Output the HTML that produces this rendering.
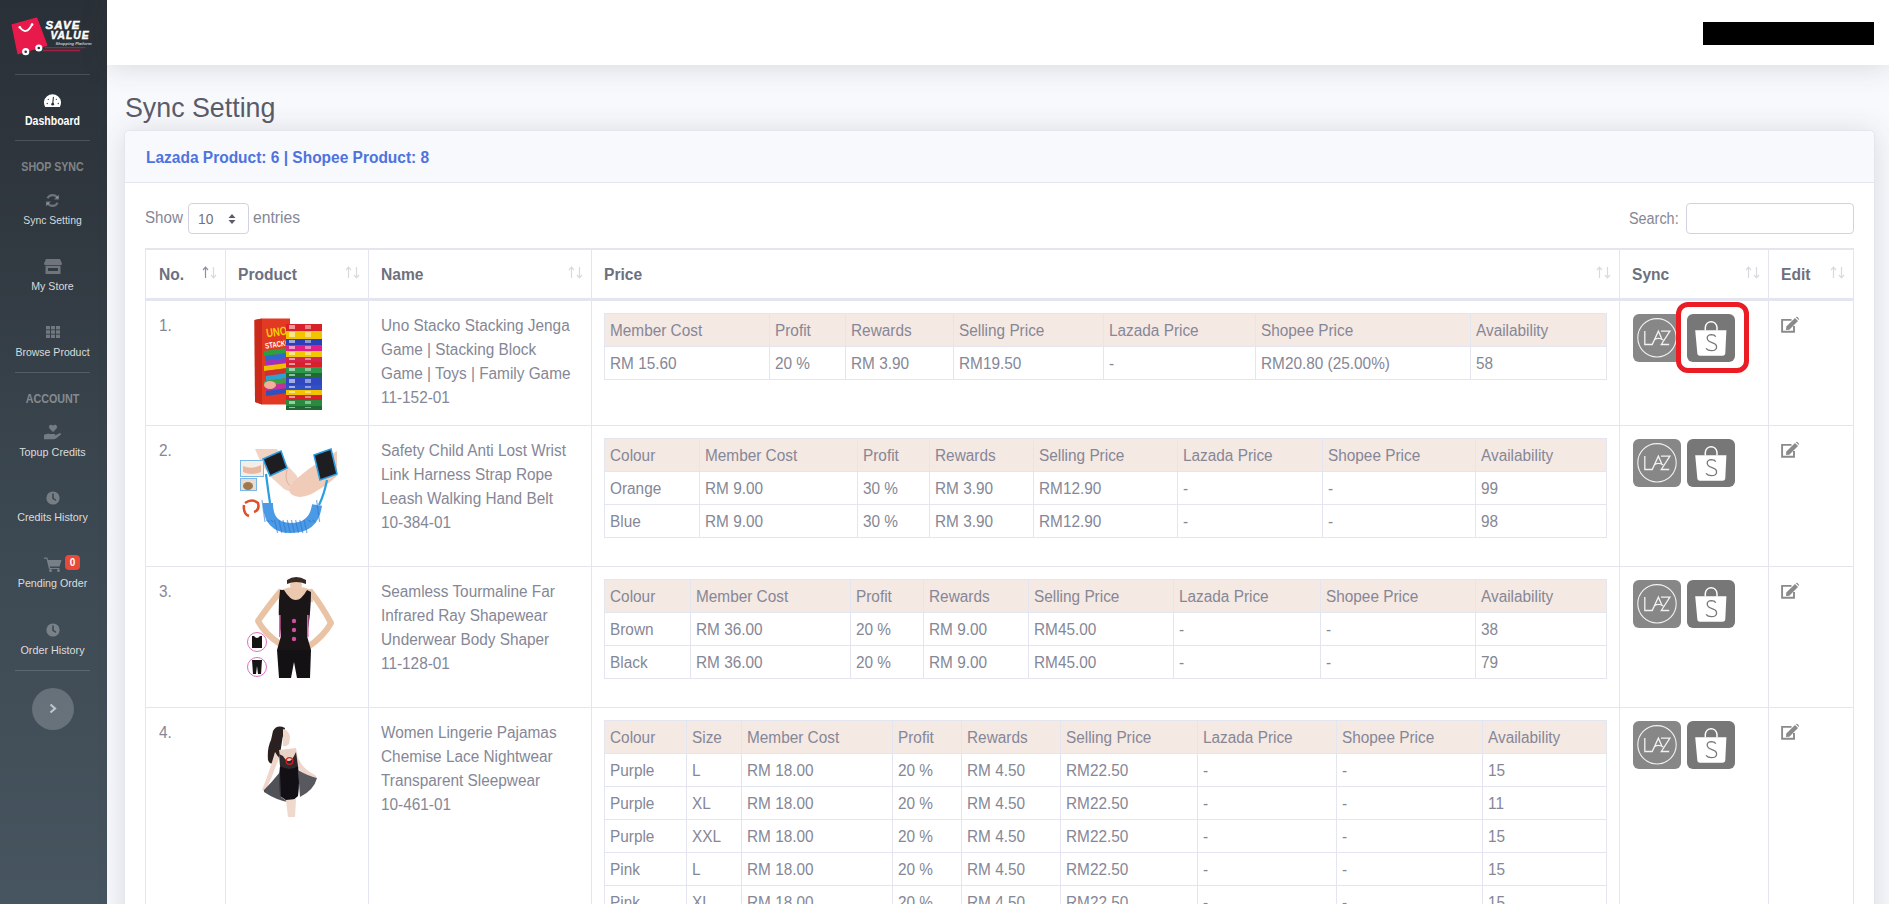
<!DOCTYPE html><html><head><meta charset="utf-8"><title>Sync Setting</title><style>
*{box-sizing:border-box}
html,body{margin:0;padding:0}
body{width:1889px;height:904px;overflow:hidden;position:relative;background:#f8f9fc;font-family:"Liberation Sans",sans-serif;color:#858796}
.abs{position:absolute}
.t{position:absolute;white-space:nowrap;line-height:1}
.sb{position:absolute;left:0;top:0;width:107px;height:904px;background:linear-gradient(180deg,#2a3037 0%,#2f363d 20%,#3b4750 55%,#475560 100%)}
.sbdiv{position:absolute;left:15px;width:75px;height:1px;background:rgba(255,255,255,.15)}
.sbt{position:absolute;left:0;width:107px;text-align:center;white-space:nowrap;line-height:1;font-size:10.5px;color:rgba(255,255,255,.85)}
.sbh{position:absolute;left:0;width:107px;text-align:center;white-space:nowrap;line-height:1;font-size:10.5px;font-weight:700;color:rgba(255,255,255,.4)}
.topbar{position:absolute;left:107px;top:0;width:1782px;height:65px;background:#fff;box-shadow:0 2.4px 28px 0 rgba(58,59,69,.16)}
.card{position:absolute;left:124px;top:130px;width:1751px;height:800px;background:#fff;border:1px solid #e3e6f0;border-radius:5px;box-shadow:0 2.4px 28px 0 rgba(58,59,69,.16);overflow:hidden}
.vl{position:absolute;width:1px;background:#e3e6f0}
.hl{position:absolute;height:1px;background:#e3e6f0}
</style></head><body>
<div class="sb">
<svg class="abs" style="left:0;top:0" width="107" height="70" viewBox="0 0 107 70">
<polygon points="12.3,25 36.6,18.2 46.7,45.3 18.1,53.5" fill="#e8194b" stroke="#e8194b" stroke-width="1.5" stroke-linejoin="round"/>
<path d="M19.8,27.3 Q26,36 32.1,24.5" fill="none" stroke="#fff" stroke-width="1.8" stroke-linecap="round"/>
<circle cx="19.8" cy="27.3" r="1.3" fill="#fff"/><circle cx="32.1" cy="24.5" r="1.3" fill="#fff"/>
<line x1="45" y1="47.6" x2="85.3" y2="47.6" stroke="#9c2440" stroke-width="1.3"/>
<line x1="43" y1="50.5" x2="80.2" y2="50.5" stroke="#9c2440" stroke-width="1.3"/>
<circle cx="25.7" cy="51.7" r="3.6" fill="#fff"/><circle cx="25.7" cy="51.7" r="1.3" fill="#2b3138"/>
<circle cx="38.8" cy="48" r="3.6" fill="#fff"/><circle cx="38.8" cy="48" r="1.3" fill="#2b3138"/>
<text x="45.5" y="28.6" font-family="Liberation Sans" font-weight="700" font-style="italic" font-size="10" fill="#fff" stroke="#fff" stroke-width="0.45" textLength="35" lengthAdjust="spacingAndGlyphs" letter-spacing="1">SAVE</text>
<text x="50.5" y="38.9" font-family="Liberation Sans" font-weight="700" font-style="italic" font-size="10" fill="#fff" stroke="#fff" stroke-width="0.45" textLength="39" lengthAdjust="spacingAndGlyphs" letter-spacing="1">VALUE</text>
<text x="55.5" y="44.6" font-family="Liberation Sans" font-weight="700" font-style="italic" font-size="3.3" fill="#c9ccd0" textLength="36" lengthAdjust="spacingAndGlyphs">Shopping Platform</text>
</svg>
<div class="sbdiv" style="top:74px"></div>
<svg class="abs" style="left:44px;top:94px" width="17" height="13" viewBox="0 0 17 13">
<path d="M1.2,13 A8.5,8.5 0 1 1 15.8,13 Z" fill="#fff"/>
<path d="M8.7,10.2 L9.4,3.3" stroke="#2c3239" stroke-width="1.1" stroke-linecap="round"/>
<circle cx="8.7" cy="10.2" r="1.4" fill="#2c3239"/>
<circle cx="4.3" cy="5.3" r="0.65" fill="#2c3239"/><circle cx="12.3" cy="5.3" r="0.65" fill="#2c3239"/>
<circle cx="3.2" cy="9.5" r="0.65" fill="#2c3239"/><circle cx="14.3" cy="9.5" r="0.65" fill="#2c3239"/>
</svg>
<div class="t" style="left:0;width:105px;text-align:center;top:115.34px;font-size:12px;font-weight:700;color:#fff;transform:scaleX(0.877);transform-origin:52.5px 0">Dashboard</div>
<div class="sbdiv" style="top:140px"></div>
<div class="t" style="left:0;width:105px;text-align:center;top:161.39px;font-size:12.3px;font-weight:700;color:rgba(255,255,255,.4);transform:scaleX(0.863);transform-origin:52.5px 0">SHOP SYNC</div>
<svg class="abs" style="left:45px;top:193px" width="15" height="15" viewBox="0 0 16 16">
<path d="M13.2,5.3 A6,6 0 0 0 2.6,5.6" fill="none" stroke="rgba(255,255,255,.3)" stroke-width="2.2"/>
<polygon points="15,1.5 15,7 9.5,7" fill="rgba(255,255,255,.3)"/>
<path d="M2.8,10.7 A6,6 0 0 0 13.4,10.4" fill="none" stroke="rgba(255,255,255,.3)" stroke-width="2.2"/>
<polygon points="1,14.5 1,9 6.5,9" fill="rgba(255,255,255,.3)"/>
</svg>
<div class="t" style="left:0;width:105px;text-align:center;top:214.77px;font-size:10.9px;font-weight:400;color:rgba(255,255,255,.82);transform:scaleX(0.956);transform-origin:52.5px 0">Sync Setting</div>
<svg class="abs" style="left:44px;top:259px" width="18" height="15" viewBox="0 0 18 15">
<path d="M2,0 H16 L18,4.5 Q18,6 16.5,6.2 H1.5 Q0,6 0,4.5 Z" fill="rgba(255,255,255,.3)"/>
<path d="M1.5,7 H16.5 V15 H1.5 Z M4,9 V12 H14 V9 Z" fill="rgba(255,255,255,.3)" fill-rule="evenodd"/>
</svg>
<div class="t" style="left:0;width:105px;text-align:center;top:281.27px;font-size:10.9px;font-weight:400;color:rgba(255,255,255,.82);transform:scaleX(0.977);transform-origin:52.5px 0">My Store</div>
<svg class="abs" style="left:45px;top:326px" width="16" height="13" viewBox="0 0 16 13"><rect x="1" y="0.0" width="4" height="3.4" fill="rgba(255,255,255,.3)"/><rect x="6" y="0.0" width="4" height="3.4" fill="rgba(255,255,255,.3)"/><rect x="11" y="0.0" width="4" height="3.4" fill="rgba(255,255,255,.3)"/><rect x="1" y="4.3" width="4" height="3.4" fill="rgba(255,255,255,.3)"/><rect x="6" y="4.3" width="4" height="3.4" fill="rgba(255,255,255,.3)"/><rect x="11" y="4.3" width="4" height="3.4" fill="rgba(255,255,255,.3)"/><rect x="1" y="8.6" width="4" height="3.4" fill="rgba(255,255,255,.3)"/><rect x="6" y="8.6" width="4" height="3.4" fill="rgba(255,255,255,.3)"/><rect x="11" y="8.6" width="4" height="3.4" fill="rgba(255,255,255,.3)"/></svg>
<div class="t" style="left:0;width:105px;text-align:center;top:347.27px;font-size:10.9px;font-weight:400;color:rgba(255,255,255,.82);transform:scaleX(0.965);transform-origin:52.5px 0">Browse Product</div>
<div class="sbdiv" style="top:372px"></div>
<div class="t" style="left:0;width:105px;text-align:center;top:392.59px;font-size:12.3px;font-weight:700;color:rgba(255,255,255,.4);transform:scaleX(0.873);transform-origin:52.5px 0">ACCOUNT</div>
<svg class="abs" style="left:44px;top:424px" width="18" height="16" viewBox="0 0 18 16">
<path d="M9,8 L5.5,4.5 Q4,2.5 5.8,1 Q7.5,0 9,1.8 Q10.5,0 12.2,1 Q14,2.5 12.5,4.5 Z" fill="rgba(255,255,255,.3)"/>
<path d="M0,11 Q3,9 6,10 H10.5 Q11.8,10.3 11,11.5 H7.5 H11 L15.5,9.3 Q17.5,9 17,10.5 L12,14.5 Q11,15.3 9.5,15.3 H0 Z" fill="rgba(255,255,255,.3)"/>
</svg>
<div class="t" style="left:0;width:105px;text-align:center;top:446.77px;font-size:10.9px;font-weight:400;color:rgba(255,255,255,.82);transform:scaleX(0.99);transform-origin:52.5px 0">Topup Credits</div>
<svg class="abs" style="left:46px;top:491px" width="14" height="14" viewBox="0 0 14 14">
<circle cx="7" cy="7" r="6.6" fill="rgba(255,255,255,.3)"/><path d="M7,3 V7.3 L9.5,9" stroke="#3a444c" stroke-width="1.5" fill="none" stroke-linecap="round"/></svg>
<div class="t" style="left:0;width:105px;text-align:center;top:512.27px;font-size:10.9px;font-weight:400;color:rgba(255,255,255,.82);transform:scaleX(0.99);transform-origin:52.5px 0">Credits History</div>
<svg class="abs" style="left:44px;top:557px" width="18" height="15" viewBox="0 0 18 15">
<path d="M0,0.5 H3.3 L4,3 H17.5 L15.5,9.5 H5.8 L6.2,11 H15.5 V12 H5 L2.5,1.8 H0 Z" fill="rgba(255,255,255,.3)"/>
<circle cx="6.5" cy="13.5" r="1.5" fill="rgba(255,255,255,.3)"/><circle cx="14.5" cy="13.5" r="1.5" fill="rgba(255,255,255,.3)"/>
</svg>
<div class="abs" style="left:65px;top:555px;width:15px;height:15px;border-radius:4px;background:#e74a3b;color:#fff;font-size:10px;font-weight:700;line-height:15px;text-align:center">0</div>
<div class="t" style="left:0;width:105px;text-align:center;top:578.27px;font-size:10.9px;font-weight:400;color:rgba(255,255,255,.82);transform:scaleX(0.98);transform-origin:52.5px 0">Pending Order</div>
<svg class="abs" style="left:46px;top:623px" width="14" height="14" viewBox="0 0 14 14">
<circle cx="7" cy="7" r="6.6" fill="rgba(255,255,255,.3)"/><path d="M7,3 V7.3 L9.5,9" stroke="#3a444c" stroke-width="1.5" fill="none" stroke-linecap="round"/></svg>
<div class="t" style="left:0;width:105px;text-align:center;top:644.77px;font-size:10.9px;font-weight:400;color:rgba(255,255,255,.82);transform:scaleX(0.99);transform-origin:52.5px 0">Order History</div>
<div class="sbdiv" style="top:670px"></div>
<div class="abs" style="left:32px;top:688px;width:42px;height:42px;border-radius:50%;background:rgba(255,255,255,.2)"></div>
<svg class="abs" style="left:49px;top:703px" width="8" height="11" viewBox="0 0 8 11"><path d="M1.5,1.5 L6,5.5 L1.5,9.5" fill="none" stroke="rgba(225,232,245,.7)" stroke-width="2.2"/></svg>
</div>
<div class="topbar"><div class="abs" style="left:1596px;top:22px;width:171px;height:23px;background:#000"></div></div>
<div class="t" style="left:125px;top:92.87px;font-size:28.5px;color:#5a5c69;transform:scaleX(0.94);transform-origin:0 0">Sync Setting</div>
<div class="card">
</div>
<div class="abs" style="left:125px;top:131px;width:1749px;height:52px;background:#f8f9fc;border-bottom:1px solid #e3e6f0;border-radius:5px 5px 0 0"></div>
<div class="t" style="left:146px;top:150.46px;font-size:16px;font-weight:700;color:#4e73df;transform:scaleX(0.968);transform-origin:0 0">Lazada Product: 6 | Shopee Product: 8</div>
<div class="t" style="left:145px;top:210.46px;font-size:16px;font-weight:400;color:#858796;transform:scaleX(0.945);transform-origin:0 0;">Show</div>
<div class="abs" style="left:188px;top:203px;width:61px;height:31px;border:1px solid #d1d3e2;border-radius:4px;background:#fff"></div>
<div class="t" style="left:198px;top:211.73px;font-size:14.5px;font-weight:400;color:#6e707e;transform:scaleX(0.95);transform-origin:0 0;">10</div>
<svg class="abs" style="left:228px;top:213px" width="8" height="12" viewBox="0 0 8 12"><path d="M0.5,5 L4,1 L7.5,5 Z M0.5,7 L4,11 L7.5,7 Z" fill="#5a5c69"/></svg>
<div class="t" style="left:253px;top:210.46px;font-size:16px;font-weight:400;color:#858796;transform:scaleX(0.98);transform-origin:0 0;">entries</div>
<div class="t" style="left:1629px;top:211.46px;font-size:16px;font-weight:400;color:#858796;transform:scaleX(0.9);transform-origin:0 0;">Search:</div>
<div class="abs" style="left:1686px;top:203px;width:168px;height:31px;border:1px solid #d1d3e2;border-radius:4px;background:#fff"></div>
<div class="abs" style="left:145px;top:248px;width:1709px;height:2px;background:#e3e6f0"></div>
<div class="vl" style="left:145px;top:248px;height:656px"></div>
<div class="vl" style="left:1853px;top:248px;height:656px"></div>
<div class="vl" style="left:225px;top:250px;height:654px"></div>
<div class="vl" style="left:368px;top:250px;height:654px"></div>
<div class="vl" style="left:591px;top:250px;height:654px"></div>
<div class="vl" style="left:1619px;top:250px;height:654px"></div>
<div class="vl" style="left:1768px;top:250px;height:654px"></div>
<div class="abs" style="left:145px;top:298px;width:1709px;height:3px;background:#e3e6f0"></div>
<div class="hl" style="left:145px;top:425px;width:1709px"></div>
<div class="hl" style="left:145px;top:566px;width:1709px"></div>
<div class="hl" style="left:145px;top:707px;width:1709px"></div>
<div class="t" style="left:159px;top:267.46px;font-size:16px;font-weight:700;color:#6e707e;transform:scaleX(0.975);transform-origin:0 0;">No.</div>
<div class="t" style="left:238px;top:267.46px;font-size:16px;font-weight:700;color:#6e707e;transform:scaleX(0.975);transform-origin:0 0;">Product</div>
<div class="t" style="left:381px;top:267.46px;font-size:16px;font-weight:700;color:#6e707e;transform:scaleX(0.975);transform-origin:0 0;">Name</div>
<div class="t" style="left:604px;top:267.46px;font-size:16px;font-weight:700;color:#6e707e;transform:scaleX(0.975);transform-origin:0 0;">Price</div>
<div class="t" style="left:1632px;top:267.46px;font-size:16px;font-weight:700;color:#6e707e;transform:scaleX(0.975);transform-origin:0 0;">Sync</div>
<div class="t" style="left:1781px;top:267.46px;font-size:16px;font-weight:700;color:#6e707e;transform:scaleX(0.975);transform-origin:0 0;">Edit</div>
<svg class="abs" style="left:202px;top:266px" width="16" height="13" viewBox="0 0 16 13"><path d="M3.5,12 V1.5 M1,4 L3.5,1.2 L6,4" fill="none" stroke="#8d8f9e" stroke-width="1.2"/><path d="M11.5,1 V11.5 M9,9 L11.5,11.8 L14,9" fill="none" stroke="#d9dae0" stroke-width="1.2"/></svg>
<svg class="abs" style="left:345px;top:266px" width="16" height="13" viewBox="0 0 16 13"><path d="M3.5,12 V1.5 M1,4 L3.5,1.2 L6,4" fill="none" stroke="#d9dae0" stroke-width="1.2"/><path d="M11.5,1 V11.5 M9,9 L11.5,11.8 L14,9" fill="none" stroke="#d9dae0" stroke-width="1.2"/></svg>
<svg class="abs" style="left:568px;top:266px" width="16" height="13" viewBox="0 0 16 13"><path d="M3.5,12 V1.5 M1,4 L3.5,1.2 L6,4" fill="none" stroke="#d9dae0" stroke-width="1.2"/><path d="M11.5,1 V11.5 M9,9 L11.5,11.8 L14,9" fill="none" stroke="#d9dae0" stroke-width="1.2"/></svg>
<svg class="abs" style="left:1596px;top:266px" width="16" height="13" viewBox="0 0 16 13"><path d="M3.5,12 V1.5 M1,4 L3.5,1.2 L6,4" fill="none" stroke="#d9dae0" stroke-width="1.2"/><path d="M11.5,1 V11.5 M9,9 L11.5,11.8 L14,9" fill="none" stroke="#d9dae0" stroke-width="1.2"/></svg>
<svg class="abs" style="left:1745px;top:266px" width="16" height="13" viewBox="0 0 16 13"><path d="M3.5,12 V1.5 M1,4 L3.5,1.2 L6,4" fill="none" stroke="#d9dae0" stroke-width="1.2"/><path d="M11.5,1 V11.5 M9,9 L11.5,11.8 L14,9" fill="none" stroke="#d9dae0" stroke-width="1.2"/></svg>
<svg class="abs" style="left:1830px;top:266px" width="16" height="13" viewBox="0 0 16 13"><path d="M3.5,12 V1.5 M1,4 L3.5,1.2 L6,4" fill="none" stroke="#d9dae0" stroke-width="1.2"/><path d="M11.5,1 V11.5 M9,9 L11.5,11.8 L14,9" fill="none" stroke="#d9dae0" stroke-width="1.2"/></svg>
<div class="t" style="left:159px;top:318.46px;font-size:16px;font-weight:400;color:#858796;transform:scaleX(0.96);transform-origin:0 0;">1.</div>
<div class="t" style="left:381px;top:318.46px;font-size:16px;font-weight:400;color:#858796;transform:scaleX(0.96);transform-origin:0 0;">Uno Stacko Stacking Jenga</div>
<div class="t" style="left:381px;top:342.46px;font-size:16px;font-weight:400;color:#858796;transform:scaleX(0.96);transform-origin:0 0;">Game | Stacking Block</div>
<div class="t" style="left:381px;top:366.46px;font-size:16px;font-weight:400;color:#858796;transform:scaleX(0.96);transform-origin:0 0;">Game | Toys | Family Game</div>
<div class="t" style="left:381px;top:390.46px;font-size:16px;font-weight:400;color:#858796;transform:scaleX(0.96);transform-origin:0 0;">11-152-01</div>
<div class="abs" style="left:604px;top:313px;width:1003px;height:34px;background:#f5e9e4"></div>
<div class="hl" style="left:604px;top:313px;width:1003px"></div>
<div class="hl" style="left:604px;top:346px;width:1003px"></div>
<div class="hl" style="left:604px;top:379px;width:1003px"></div>
<div class="vl" style="left:604px;top:313px;height:67px"></div>
<div class="vl" style="left:769px;top:313px;height:67px"></div>
<div class="vl" style="left:845px;top:313px;height:67px"></div>
<div class="vl" style="left:953px;top:313px;height:67px"></div>
<div class="vl" style="left:1103px;top:313px;height:67px"></div>
<div class="vl" style="left:1255px;top:313px;height:67px"></div>
<div class="vl" style="left:1470px;top:313px;height:67px"></div>
<div class="vl" style="left:1606px;top:313px;height:67px"></div>
<div class="t" style="left:610px;top:323.46px;font-size:16px;font-weight:400;color:#858796;transform:scaleX(0.96);transform-origin:0 0;">Member Cost</div>
<div class="t" style="left:775px;top:323.46px;font-size:16px;font-weight:400;color:#858796;transform:scaleX(0.96);transform-origin:0 0;">Profit</div>
<div class="t" style="left:851px;top:323.46px;font-size:16px;font-weight:400;color:#858796;transform:scaleX(0.96);transform-origin:0 0;">Rewards</div>
<div class="t" style="left:959px;top:323.46px;font-size:16px;font-weight:400;color:#858796;transform:scaleX(0.96);transform-origin:0 0;">Selling Price</div>
<div class="t" style="left:1109px;top:323.46px;font-size:16px;font-weight:400;color:#858796;transform:scaleX(0.96);transform-origin:0 0;">Lazada Price</div>
<div class="t" style="left:1261px;top:323.46px;font-size:16px;font-weight:400;color:#858796;transform:scaleX(0.96);transform-origin:0 0;">Shopee Price</div>
<div class="t" style="left:1476px;top:323.46px;font-size:16px;font-weight:400;color:#858796;transform:scaleX(0.96);transform-origin:0 0;">Availability</div>
<div class="t" style="left:610px;top:356.46px;font-size:16px;font-weight:400;color:#858796;transform:scaleX(0.96);transform-origin:0 0;">RM 15.60</div>
<div class="t" style="left:775px;top:356.46px;font-size:16px;font-weight:400;color:#858796;transform:scaleX(0.96);transform-origin:0 0;">20 %</div>
<div class="t" style="left:851px;top:356.46px;font-size:16px;font-weight:400;color:#858796;transform:scaleX(0.96);transform-origin:0 0;">RM 3.90</div>
<div class="t" style="left:959px;top:356.46px;font-size:16px;font-weight:400;color:#858796;transform:scaleX(0.96);transform-origin:0 0;">RM19.50</div>
<div class="t" style="left:1109px;top:356.46px;font-size:16px;font-weight:400;color:#858796;transform:scaleX(0.96);transform-origin:0 0;">-</div>
<div class="t" style="left:1261px;top:356.46px;font-size:16px;font-weight:400;color:#858796;transform:scaleX(0.96);transform-origin:0 0;">RM20.80 (25.00%)</div>
<div class="t" style="left:1476px;top:356.46px;font-size:16px;font-weight:400;color:#858796;transform:scaleX(0.96);transform-origin:0 0;">58</div>
<svg class="abs" style="left:1633px;top:314px" width="48" height="48" viewBox="0 0 48 48"><rect x="0" y="0" width="48" height="48" rx="6" fill="#878787"/><circle cx="24" cy="23.8" r="19.2" fill="none" stroke="#f2f2f2" stroke-width="1.1"/><path d="M11.8,17.1 V30.5 H19.2 L25.4,17.2 L28.8,25.1 M21.9,25.4 Q25.5,23.3 30.2,25.9 M28,17.2 H36.9 L28.3,30.5 H36.2" fill="none" stroke="#f2f2f2" stroke-width="1.3" stroke-linejoin="miter"/></svg>
<svg class="abs" style="left:1687px;top:314px" width="48" height="48" viewBox="0 0 48 48"><rect x="0" y="0" width="48" height="48" rx="6" fill="#777777"/><path d="M18.3,16.4 V13.5 A5.9,6.6 0 0 1 30,13.5 V16.4" fill="none" stroke="#fff" stroke-width="1.5"/><path d="M8.2,16.2 H39.4 L38.3,39 Q38.2,41.8 35.5,41.8 H13 Q10.4,41.8 10.3,39 Z" fill="#fff"/><path d="M28.8,22.6 Q27.5,20.6 24.5,20.6 Q20,20.8 20.2,24.3 Q20.5,27.2 25,28.6 Q29.8,30 29.6,33.2 Q29.3,36.7 24.5,36.7 Q20.8,36.6 19,34.3" fill="none" stroke="#777" stroke-width="1.3"/></svg>
<svg class="abs" style="left:1780px;top:316px" width="20" height="18" viewBox="0 0 20 18"><path d="M11.5,3.9 H2.1 V15.8 H14 V10" fill="none" stroke="#8a8a8a" stroke-width="1.9"/><path d="M6,14 L6.3,10.6 L15,2 L18,5 L9.3,13.7 Z" fill="#8a8a8a"/><path d="M15.8,1.2 Q16.7,0.4 17.5,1.1 L18.8,2.4 Q19.6,3.2 18.8,4.1 Z" fill="#8a8a8a"/></svg>
<div class="t" style="left:159px;top:443.46px;font-size:16px;font-weight:400;color:#858796;transform:scaleX(0.96);transform-origin:0 0;">2.</div>
<div class="t" style="left:381px;top:443.46px;font-size:16px;font-weight:400;color:#858796;transform:scaleX(0.96);transform-origin:0 0;">Safety Child Anti Lost Wrist</div>
<div class="t" style="left:381px;top:467.46px;font-size:16px;font-weight:400;color:#858796;transform:scaleX(0.96);transform-origin:0 0;">Link Harness Strap Rope</div>
<div class="t" style="left:381px;top:491.46px;font-size:16px;font-weight:400;color:#858796;transform:scaleX(0.96);transform-origin:0 0;">Leash Walking Hand Belt</div>
<div class="t" style="left:381px;top:515.46px;font-size:16px;font-weight:400;color:#858796;transform:scaleX(0.96);transform-origin:0 0;">10-384-01</div>
<div class="abs" style="left:604px;top:438px;width:1003px;height:34px;background:#f5e9e4"></div>
<div class="hl" style="left:604px;top:438px;width:1003px"></div>
<div class="hl" style="left:604px;top:471px;width:1003px"></div>
<div class="hl" style="left:604px;top:504px;width:1003px"></div>
<div class="hl" style="left:604px;top:537px;width:1003px"></div>
<div class="vl" style="left:604px;top:438px;height:100px"></div>
<div class="vl" style="left:699px;top:438px;height:100px"></div>
<div class="vl" style="left:857px;top:438px;height:100px"></div>
<div class="vl" style="left:929px;top:438px;height:100px"></div>
<div class="vl" style="left:1033px;top:438px;height:100px"></div>
<div class="vl" style="left:1177px;top:438px;height:100px"></div>
<div class="vl" style="left:1322px;top:438px;height:100px"></div>
<div class="vl" style="left:1475px;top:438px;height:100px"></div>
<div class="vl" style="left:1606px;top:438px;height:100px"></div>
<div class="t" style="left:610px;top:448.46px;font-size:16px;font-weight:400;color:#858796;transform:scaleX(0.96);transform-origin:0 0;">Colour</div>
<div class="t" style="left:705px;top:448.46px;font-size:16px;font-weight:400;color:#858796;transform:scaleX(0.96);transform-origin:0 0;">Member Cost</div>
<div class="t" style="left:863px;top:448.46px;font-size:16px;font-weight:400;color:#858796;transform:scaleX(0.96);transform-origin:0 0;">Profit</div>
<div class="t" style="left:935px;top:448.46px;font-size:16px;font-weight:400;color:#858796;transform:scaleX(0.96);transform-origin:0 0;">Rewards</div>
<div class="t" style="left:1039px;top:448.46px;font-size:16px;font-weight:400;color:#858796;transform:scaleX(0.96);transform-origin:0 0;">Selling Price</div>
<div class="t" style="left:1183px;top:448.46px;font-size:16px;font-weight:400;color:#858796;transform:scaleX(0.96);transform-origin:0 0;">Lazada Price</div>
<div class="t" style="left:1328px;top:448.46px;font-size:16px;font-weight:400;color:#858796;transform:scaleX(0.96);transform-origin:0 0;">Shopee Price</div>
<div class="t" style="left:1481px;top:448.46px;font-size:16px;font-weight:400;color:#858796;transform:scaleX(0.96);transform-origin:0 0;">Availability</div>
<div class="t" style="left:610px;top:481.46px;font-size:16px;font-weight:400;color:#858796;transform:scaleX(0.96);transform-origin:0 0;">Orange</div>
<div class="t" style="left:705px;top:481.46px;font-size:16px;font-weight:400;color:#858796;transform:scaleX(0.96);transform-origin:0 0;">RM 9.00</div>
<div class="t" style="left:863px;top:481.46px;font-size:16px;font-weight:400;color:#858796;transform:scaleX(0.96);transform-origin:0 0;">30 %</div>
<div class="t" style="left:935px;top:481.46px;font-size:16px;font-weight:400;color:#858796;transform:scaleX(0.96);transform-origin:0 0;">RM 3.90</div>
<div class="t" style="left:1039px;top:481.46px;font-size:16px;font-weight:400;color:#858796;transform:scaleX(0.96);transform-origin:0 0;">RM12.90</div>
<div class="t" style="left:1183px;top:481.46px;font-size:16px;font-weight:400;color:#858796;transform:scaleX(0.96);transform-origin:0 0;">-</div>
<div class="t" style="left:1328px;top:481.46px;font-size:16px;font-weight:400;color:#858796;transform:scaleX(0.96);transform-origin:0 0;">-</div>
<div class="t" style="left:1481px;top:481.46px;font-size:16px;font-weight:400;color:#858796;transform:scaleX(0.96);transform-origin:0 0;">99</div>
<div class="t" style="left:610px;top:514.46px;font-size:16px;font-weight:400;color:#858796;transform:scaleX(0.96);transform-origin:0 0;">Blue</div>
<div class="t" style="left:705px;top:514.46px;font-size:16px;font-weight:400;color:#858796;transform:scaleX(0.96);transform-origin:0 0;">RM 9.00</div>
<div class="t" style="left:863px;top:514.46px;font-size:16px;font-weight:400;color:#858796;transform:scaleX(0.96);transform-origin:0 0;">30 %</div>
<div class="t" style="left:935px;top:514.46px;font-size:16px;font-weight:400;color:#858796;transform:scaleX(0.96);transform-origin:0 0;">RM 3.90</div>
<div class="t" style="left:1039px;top:514.46px;font-size:16px;font-weight:400;color:#858796;transform:scaleX(0.96);transform-origin:0 0;">RM12.90</div>
<div class="t" style="left:1183px;top:514.46px;font-size:16px;font-weight:400;color:#858796;transform:scaleX(0.96);transform-origin:0 0;">-</div>
<div class="t" style="left:1328px;top:514.46px;font-size:16px;font-weight:400;color:#858796;transform:scaleX(0.96);transform-origin:0 0;">-</div>
<div class="t" style="left:1481px;top:514.46px;font-size:16px;font-weight:400;color:#858796;transform:scaleX(0.96);transform-origin:0 0;">98</div>
<svg class="abs" style="left:1633px;top:439px" width="48" height="48" viewBox="0 0 48 48"><rect x="0" y="0" width="48" height="48" rx="6" fill="#878787"/><circle cx="24" cy="23.8" r="19.2" fill="none" stroke="#f2f2f2" stroke-width="1.1"/><path d="M11.8,17.1 V30.5 H19.2 L25.4,17.2 L28.8,25.1 M21.9,25.4 Q25.5,23.3 30.2,25.9 M28,17.2 H36.9 L28.3,30.5 H36.2" fill="none" stroke="#f2f2f2" stroke-width="1.3" stroke-linejoin="miter"/></svg>
<svg class="abs" style="left:1687px;top:439px" width="48" height="48" viewBox="0 0 48 48"><rect x="0" y="0" width="48" height="48" rx="6" fill="#777777"/><path d="M18.3,16.4 V13.5 A5.9,6.6 0 0 1 30,13.5 V16.4" fill="none" stroke="#fff" stroke-width="1.5"/><path d="M8.2,16.2 H39.4 L38.3,39 Q38.2,41.8 35.5,41.8 H13 Q10.4,41.8 10.3,39 Z" fill="#fff"/><path d="M28.8,22.6 Q27.5,20.6 24.5,20.6 Q20,20.8 20.2,24.3 Q20.5,27.2 25,28.6 Q29.8,30 29.6,33.2 Q29.3,36.7 24.5,36.7 Q20.8,36.6 19,34.3" fill="none" stroke="#777" stroke-width="1.3"/></svg>
<svg class="abs" style="left:1780px;top:441px" width="20" height="18" viewBox="0 0 20 18"><path d="M11.5,3.9 H2.1 V15.8 H14 V10" fill="none" stroke="#8a8a8a" stroke-width="1.9"/><path d="M6,14 L6.3,10.6 L15,2 L18,5 L9.3,13.7 Z" fill="#8a8a8a"/><path d="M15.8,1.2 Q16.7,0.4 17.5,1.1 L18.8,2.4 Q19.6,3.2 18.8,4.1 Z" fill="#8a8a8a"/></svg>
<div class="t" style="left:159px;top:584.46px;font-size:16px;font-weight:400;color:#858796;transform:scaleX(0.96);transform-origin:0 0;">3.</div>
<div class="t" style="left:381px;top:584.46px;font-size:16px;font-weight:400;color:#858796;transform:scaleX(0.96);transform-origin:0 0;">Seamless Tourmaline Far</div>
<div class="t" style="left:381px;top:608.46px;font-size:16px;font-weight:400;color:#858796;transform:scaleX(0.96);transform-origin:0 0;">Infrared Ray Shapewear</div>
<div class="t" style="left:381px;top:632.46px;font-size:16px;font-weight:400;color:#858796;transform:scaleX(0.96);transform-origin:0 0;">Underwear Body Shaper</div>
<div class="t" style="left:381px;top:656.46px;font-size:16px;font-weight:400;color:#858796;transform:scaleX(0.96);transform-origin:0 0;">11-128-01</div>
<div class="abs" style="left:604px;top:579px;width:1003px;height:34px;background:#f5e9e4"></div>
<div class="hl" style="left:604px;top:579px;width:1003px"></div>
<div class="hl" style="left:604px;top:612px;width:1003px"></div>
<div class="hl" style="left:604px;top:645px;width:1003px"></div>
<div class="hl" style="left:604px;top:678px;width:1003px"></div>
<div class="vl" style="left:604px;top:579px;height:100px"></div>
<div class="vl" style="left:690px;top:579px;height:100px"></div>
<div class="vl" style="left:850px;top:579px;height:100px"></div>
<div class="vl" style="left:923px;top:579px;height:100px"></div>
<div class="vl" style="left:1028px;top:579px;height:100px"></div>
<div class="vl" style="left:1173px;top:579px;height:100px"></div>
<div class="vl" style="left:1320px;top:579px;height:100px"></div>
<div class="vl" style="left:1475px;top:579px;height:100px"></div>
<div class="vl" style="left:1606px;top:579px;height:100px"></div>
<div class="t" style="left:610px;top:589.46px;font-size:16px;font-weight:400;color:#858796;transform:scaleX(0.96);transform-origin:0 0;">Colour</div>
<div class="t" style="left:696px;top:589.46px;font-size:16px;font-weight:400;color:#858796;transform:scaleX(0.96);transform-origin:0 0;">Member Cost</div>
<div class="t" style="left:856px;top:589.46px;font-size:16px;font-weight:400;color:#858796;transform:scaleX(0.96);transform-origin:0 0;">Profit</div>
<div class="t" style="left:929px;top:589.46px;font-size:16px;font-weight:400;color:#858796;transform:scaleX(0.96);transform-origin:0 0;">Rewards</div>
<div class="t" style="left:1034px;top:589.46px;font-size:16px;font-weight:400;color:#858796;transform:scaleX(0.96);transform-origin:0 0;">Selling Price</div>
<div class="t" style="left:1179px;top:589.46px;font-size:16px;font-weight:400;color:#858796;transform:scaleX(0.96);transform-origin:0 0;">Lazada Price</div>
<div class="t" style="left:1326px;top:589.46px;font-size:16px;font-weight:400;color:#858796;transform:scaleX(0.96);transform-origin:0 0;">Shopee Price</div>
<div class="t" style="left:1481px;top:589.46px;font-size:16px;font-weight:400;color:#858796;transform:scaleX(0.96);transform-origin:0 0;">Availability</div>
<div class="t" style="left:610px;top:622.46px;font-size:16px;font-weight:400;color:#858796;transform:scaleX(0.96);transform-origin:0 0;">Brown</div>
<div class="t" style="left:696px;top:622.46px;font-size:16px;font-weight:400;color:#858796;transform:scaleX(0.96);transform-origin:0 0;">RM 36.00</div>
<div class="t" style="left:856px;top:622.46px;font-size:16px;font-weight:400;color:#858796;transform:scaleX(0.96);transform-origin:0 0;">20 %</div>
<div class="t" style="left:929px;top:622.46px;font-size:16px;font-weight:400;color:#858796;transform:scaleX(0.96);transform-origin:0 0;">RM 9.00</div>
<div class="t" style="left:1034px;top:622.46px;font-size:16px;font-weight:400;color:#858796;transform:scaleX(0.96);transform-origin:0 0;">RM45.00</div>
<div class="t" style="left:1179px;top:622.46px;font-size:16px;font-weight:400;color:#858796;transform:scaleX(0.96);transform-origin:0 0;">-</div>
<div class="t" style="left:1326px;top:622.46px;font-size:16px;font-weight:400;color:#858796;transform:scaleX(0.96);transform-origin:0 0;">-</div>
<div class="t" style="left:1481px;top:622.46px;font-size:16px;font-weight:400;color:#858796;transform:scaleX(0.96);transform-origin:0 0;">38</div>
<div class="t" style="left:610px;top:655.46px;font-size:16px;font-weight:400;color:#858796;transform:scaleX(0.96);transform-origin:0 0;">Black</div>
<div class="t" style="left:696px;top:655.46px;font-size:16px;font-weight:400;color:#858796;transform:scaleX(0.96);transform-origin:0 0;">RM 36.00</div>
<div class="t" style="left:856px;top:655.46px;font-size:16px;font-weight:400;color:#858796;transform:scaleX(0.96);transform-origin:0 0;">20 %</div>
<div class="t" style="left:929px;top:655.46px;font-size:16px;font-weight:400;color:#858796;transform:scaleX(0.96);transform-origin:0 0;">RM 9.00</div>
<div class="t" style="left:1034px;top:655.46px;font-size:16px;font-weight:400;color:#858796;transform:scaleX(0.96);transform-origin:0 0;">RM45.00</div>
<div class="t" style="left:1179px;top:655.46px;font-size:16px;font-weight:400;color:#858796;transform:scaleX(0.96);transform-origin:0 0;">-</div>
<div class="t" style="left:1326px;top:655.46px;font-size:16px;font-weight:400;color:#858796;transform:scaleX(0.96);transform-origin:0 0;">-</div>
<div class="t" style="left:1481px;top:655.46px;font-size:16px;font-weight:400;color:#858796;transform:scaleX(0.96);transform-origin:0 0;">79</div>
<svg class="abs" style="left:1633px;top:580px" width="48" height="48" viewBox="0 0 48 48"><rect x="0" y="0" width="48" height="48" rx="6" fill="#878787"/><circle cx="24" cy="23.8" r="19.2" fill="none" stroke="#f2f2f2" stroke-width="1.1"/><path d="M11.8,17.1 V30.5 H19.2 L25.4,17.2 L28.8,25.1 M21.9,25.4 Q25.5,23.3 30.2,25.9 M28,17.2 H36.9 L28.3,30.5 H36.2" fill="none" stroke="#f2f2f2" stroke-width="1.3" stroke-linejoin="miter"/></svg>
<svg class="abs" style="left:1687px;top:580px" width="48" height="48" viewBox="0 0 48 48"><rect x="0" y="0" width="48" height="48" rx="6" fill="#777777"/><path d="M18.3,16.4 V13.5 A5.9,6.6 0 0 1 30,13.5 V16.4" fill="none" stroke="#fff" stroke-width="1.5"/><path d="M8.2,16.2 H39.4 L38.3,39 Q38.2,41.8 35.5,41.8 H13 Q10.4,41.8 10.3,39 Z" fill="#fff"/><path d="M28.8,22.6 Q27.5,20.6 24.5,20.6 Q20,20.8 20.2,24.3 Q20.5,27.2 25,28.6 Q29.8,30 29.6,33.2 Q29.3,36.7 24.5,36.7 Q20.8,36.6 19,34.3" fill="none" stroke="#777" stroke-width="1.3"/></svg>
<svg class="abs" style="left:1780px;top:582px" width="20" height="18" viewBox="0 0 20 18"><path d="M11.5,3.9 H2.1 V15.8 H14 V10" fill="none" stroke="#8a8a8a" stroke-width="1.9"/><path d="M6,14 L6.3,10.6 L15,2 L18,5 L9.3,13.7 Z" fill="#8a8a8a"/><path d="M15.8,1.2 Q16.7,0.4 17.5,1.1 L18.8,2.4 Q19.6,3.2 18.8,4.1 Z" fill="#8a8a8a"/></svg>
<div class="t" style="left:159px;top:725.46px;font-size:16px;font-weight:400;color:#858796;transform:scaleX(0.96);transform-origin:0 0;">4.</div>
<div class="t" style="left:381px;top:725.46px;font-size:16px;font-weight:400;color:#858796;transform:scaleX(0.96);transform-origin:0 0;">Women Lingerie Pajamas</div>
<div class="t" style="left:381px;top:749.46px;font-size:16px;font-weight:400;color:#858796;transform:scaleX(0.96);transform-origin:0 0;">Chemise Lace Nightwear</div>
<div class="t" style="left:381px;top:773.46px;font-size:16px;font-weight:400;color:#858796;transform:scaleX(0.96);transform-origin:0 0;">Transparent Sleepwear</div>
<div class="t" style="left:381px;top:797.46px;font-size:16px;font-weight:400;color:#858796;transform:scaleX(0.96);transform-origin:0 0;">10-461-01</div>
<div class="abs" style="left:604px;top:720px;width:1003px;height:34px;background:#f5e9e4"></div>
<div class="hl" style="left:604px;top:720px;width:1003px"></div>
<div class="hl" style="left:604px;top:753px;width:1003px"></div>
<div class="hl" style="left:604px;top:786px;width:1003px"></div>
<div class="hl" style="left:604px;top:819px;width:1003px"></div>
<div class="hl" style="left:604px;top:852px;width:1003px"></div>
<div class="hl" style="left:604px;top:885px;width:1003px"></div>
<div class="hl" style="left:604px;top:918px;width:1003px"></div>
<div class="vl" style="left:604px;top:720px;height:199px"></div>
<div class="vl" style="left:686px;top:720px;height:199px"></div>
<div class="vl" style="left:741px;top:720px;height:199px"></div>
<div class="vl" style="left:892px;top:720px;height:199px"></div>
<div class="vl" style="left:961px;top:720px;height:199px"></div>
<div class="vl" style="left:1060px;top:720px;height:199px"></div>
<div class="vl" style="left:1197px;top:720px;height:199px"></div>
<div class="vl" style="left:1336px;top:720px;height:199px"></div>
<div class="vl" style="left:1482px;top:720px;height:199px"></div>
<div class="vl" style="left:1606px;top:720px;height:199px"></div>
<div class="t" style="left:610px;top:730.46px;font-size:16px;font-weight:400;color:#858796;transform:scaleX(0.96);transform-origin:0 0;">Colour</div>
<div class="t" style="left:692px;top:730.46px;font-size:16px;font-weight:400;color:#858796;transform:scaleX(0.96);transform-origin:0 0;">Size</div>
<div class="t" style="left:747px;top:730.46px;font-size:16px;font-weight:400;color:#858796;transform:scaleX(0.96);transform-origin:0 0;">Member Cost</div>
<div class="t" style="left:898px;top:730.46px;font-size:16px;font-weight:400;color:#858796;transform:scaleX(0.96);transform-origin:0 0;">Profit</div>
<div class="t" style="left:967px;top:730.46px;font-size:16px;font-weight:400;color:#858796;transform:scaleX(0.96);transform-origin:0 0;">Rewards</div>
<div class="t" style="left:1066px;top:730.46px;font-size:16px;font-weight:400;color:#858796;transform:scaleX(0.96);transform-origin:0 0;">Selling Price</div>
<div class="t" style="left:1203px;top:730.46px;font-size:16px;font-weight:400;color:#858796;transform:scaleX(0.96);transform-origin:0 0;">Lazada Price</div>
<div class="t" style="left:1342px;top:730.46px;font-size:16px;font-weight:400;color:#858796;transform:scaleX(0.96);transform-origin:0 0;">Shopee Price</div>
<div class="t" style="left:1488px;top:730.46px;font-size:16px;font-weight:400;color:#858796;transform:scaleX(0.96);transform-origin:0 0;">Availability</div>
<div class="t" style="left:610px;top:763.46px;font-size:16px;font-weight:400;color:#858796;transform:scaleX(0.96);transform-origin:0 0;">Purple</div>
<div class="t" style="left:692px;top:763.46px;font-size:16px;font-weight:400;color:#858796;transform:scaleX(0.96);transform-origin:0 0;">L</div>
<div class="t" style="left:747px;top:763.46px;font-size:16px;font-weight:400;color:#858796;transform:scaleX(0.96);transform-origin:0 0;">RM 18.00</div>
<div class="t" style="left:898px;top:763.46px;font-size:16px;font-weight:400;color:#858796;transform:scaleX(0.96);transform-origin:0 0;">20 %</div>
<div class="t" style="left:967px;top:763.46px;font-size:16px;font-weight:400;color:#858796;transform:scaleX(0.96);transform-origin:0 0;">RM 4.50</div>
<div class="t" style="left:1066px;top:763.46px;font-size:16px;font-weight:400;color:#858796;transform:scaleX(0.96);transform-origin:0 0;">RM22.50</div>
<div class="t" style="left:1203px;top:763.46px;font-size:16px;font-weight:400;color:#858796;transform:scaleX(0.96);transform-origin:0 0;">-</div>
<div class="t" style="left:1342px;top:763.46px;font-size:16px;font-weight:400;color:#858796;transform:scaleX(0.96);transform-origin:0 0;">-</div>
<div class="t" style="left:1488px;top:763.46px;font-size:16px;font-weight:400;color:#858796;transform:scaleX(0.96);transform-origin:0 0;">15</div>
<div class="t" style="left:610px;top:796.46px;font-size:16px;font-weight:400;color:#858796;transform:scaleX(0.96);transform-origin:0 0;">Purple</div>
<div class="t" style="left:692px;top:796.46px;font-size:16px;font-weight:400;color:#858796;transform:scaleX(0.96);transform-origin:0 0;">XL</div>
<div class="t" style="left:747px;top:796.46px;font-size:16px;font-weight:400;color:#858796;transform:scaleX(0.96);transform-origin:0 0;">RM 18.00</div>
<div class="t" style="left:898px;top:796.46px;font-size:16px;font-weight:400;color:#858796;transform:scaleX(0.96);transform-origin:0 0;">20 %</div>
<div class="t" style="left:967px;top:796.46px;font-size:16px;font-weight:400;color:#858796;transform:scaleX(0.96);transform-origin:0 0;">RM 4.50</div>
<div class="t" style="left:1066px;top:796.46px;font-size:16px;font-weight:400;color:#858796;transform:scaleX(0.96);transform-origin:0 0;">RM22.50</div>
<div class="t" style="left:1203px;top:796.46px;font-size:16px;font-weight:400;color:#858796;transform:scaleX(0.96);transform-origin:0 0;">-</div>
<div class="t" style="left:1342px;top:796.46px;font-size:16px;font-weight:400;color:#858796;transform:scaleX(0.96);transform-origin:0 0;">-</div>
<div class="t" style="left:1488px;top:796.46px;font-size:16px;font-weight:400;color:#858796;transform:scaleX(0.96);transform-origin:0 0;">11</div>
<div class="t" style="left:610px;top:829.46px;font-size:16px;font-weight:400;color:#858796;transform:scaleX(0.96);transform-origin:0 0;">Purple</div>
<div class="t" style="left:692px;top:829.46px;font-size:16px;font-weight:400;color:#858796;transform:scaleX(0.96);transform-origin:0 0;">XXL</div>
<div class="t" style="left:747px;top:829.46px;font-size:16px;font-weight:400;color:#858796;transform:scaleX(0.96);transform-origin:0 0;">RM 18.00</div>
<div class="t" style="left:898px;top:829.46px;font-size:16px;font-weight:400;color:#858796;transform:scaleX(0.96);transform-origin:0 0;">20 %</div>
<div class="t" style="left:967px;top:829.46px;font-size:16px;font-weight:400;color:#858796;transform:scaleX(0.96);transform-origin:0 0;">RM 4.50</div>
<div class="t" style="left:1066px;top:829.46px;font-size:16px;font-weight:400;color:#858796;transform:scaleX(0.96);transform-origin:0 0;">RM22.50</div>
<div class="t" style="left:1203px;top:829.46px;font-size:16px;font-weight:400;color:#858796;transform:scaleX(0.96);transform-origin:0 0;">-</div>
<div class="t" style="left:1342px;top:829.46px;font-size:16px;font-weight:400;color:#858796;transform:scaleX(0.96);transform-origin:0 0;">-</div>
<div class="t" style="left:1488px;top:829.46px;font-size:16px;font-weight:400;color:#858796;transform:scaleX(0.96);transform-origin:0 0;">15</div>
<div class="t" style="left:610px;top:862.46px;font-size:16px;font-weight:400;color:#858796;transform:scaleX(0.96);transform-origin:0 0;">Pink</div>
<div class="t" style="left:692px;top:862.46px;font-size:16px;font-weight:400;color:#858796;transform:scaleX(0.96);transform-origin:0 0;">L</div>
<div class="t" style="left:747px;top:862.46px;font-size:16px;font-weight:400;color:#858796;transform:scaleX(0.96);transform-origin:0 0;">RM 18.00</div>
<div class="t" style="left:898px;top:862.46px;font-size:16px;font-weight:400;color:#858796;transform:scaleX(0.96);transform-origin:0 0;">20 %</div>
<div class="t" style="left:967px;top:862.46px;font-size:16px;font-weight:400;color:#858796;transform:scaleX(0.96);transform-origin:0 0;">RM 4.50</div>
<div class="t" style="left:1066px;top:862.46px;font-size:16px;font-weight:400;color:#858796;transform:scaleX(0.96);transform-origin:0 0;">RM22.50</div>
<div class="t" style="left:1203px;top:862.46px;font-size:16px;font-weight:400;color:#858796;transform:scaleX(0.96);transform-origin:0 0;">-</div>
<div class="t" style="left:1342px;top:862.46px;font-size:16px;font-weight:400;color:#858796;transform:scaleX(0.96);transform-origin:0 0;">-</div>
<div class="t" style="left:1488px;top:862.46px;font-size:16px;font-weight:400;color:#858796;transform:scaleX(0.96);transform-origin:0 0;">15</div>
<div class="t" style="left:610px;top:895.46px;font-size:16px;font-weight:400;color:#858796;transform:scaleX(0.96);transform-origin:0 0;">Pink</div>
<div class="t" style="left:692px;top:895.46px;font-size:16px;font-weight:400;color:#858796;transform:scaleX(0.96);transform-origin:0 0;">XL</div>
<div class="t" style="left:747px;top:895.46px;font-size:16px;font-weight:400;color:#858796;transform:scaleX(0.96);transform-origin:0 0;">RM 18.00</div>
<div class="t" style="left:898px;top:895.46px;font-size:16px;font-weight:400;color:#858796;transform:scaleX(0.96);transform-origin:0 0;">20 %</div>
<div class="t" style="left:967px;top:895.46px;font-size:16px;font-weight:400;color:#858796;transform:scaleX(0.96);transform-origin:0 0;">RM 4.50</div>
<div class="t" style="left:1066px;top:895.46px;font-size:16px;font-weight:400;color:#858796;transform:scaleX(0.96);transform-origin:0 0;">RM22.50</div>
<div class="t" style="left:1203px;top:895.46px;font-size:16px;font-weight:400;color:#858796;transform:scaleX(0.96);transform-origin:0 0;">-</div>
<div class="t" style="left:1342px;top:895.46px;font-size:16px;font-weight:400;color:#858796;transform:scaleX(0.96);transform-origin:0 0;">-</div>
<div class="t" style="left:1488px;top:895.46px;font-size:16px;font-weight:400;color:#858796;transform:scaleX(0.96);transform-origin:0 0;">15</div>
<svg class="abs" style="left:1633px;top:721px" width="48" height="48" viewBox="0 0 48 48"><rect x="0" y="0" width="48" height="48" rx="6" fill="#878787"/><circle cx="24" cy="23.8" r="19.2" fill="none" stroke="#f2f2f2" stroke-width="1.1"/><path d="M11.8,17.1 V30.5 H19.2 L25.4,17.2 L28.8,25.1 M21.9,25.4 Q25.5,23.3 30.2,25.9 M28,17.2 H36.9 L28.3,30.5 H36.2" fill="none" stroke="#f2f2f2" stroke-width="1.3" stroke-linejoin="miter"/></svg>
<svg class="abs" style="left:1687px;top:721px" width="48" height="48" viewBox="0 0 48 48"><rect x="0" y="0" width="48" height="48" rx="6" fill="#777777"/><path d="M18.3,16.4 V13.5 A5.9,6.6 0 0 1 30,13.5 V16.4" fill="none" stroke="#fff" stroke-width="1.5"/><path d="M8.2,16.2 H39.4 L38.3,39 Q38.2,41.8 35.5,41.8 H13 Q10.4,41.8 10.3,39 Z" fill="#fff"/><path d="M28.8,22.6 Q27.5,20.6 24.5,20.6 Q20,20.8 20.2,24.3 Q20.5,27.2 25,28.6 Q29.8,30 29.6,33.2 Q29.3,36.7 24.5,36.7 Q20.8,36.6 19,34.3" fill="none" stroke="#777" stroke-width="1.3"/></svg>
<svg class="abs" style="left:1780px;top:723px" width="20" height="18" viewBox="0 0 20 18"><path d="M11.5,3.9 H2.1 V15.8 H14 V10" fill="none" stroke="#8a8a8a" stroke-width="1.9"/><path d="M6,14 L6.3,10.6 L15,2 L18,5 L9.3,13.7 Z" fill="#8a8a8a"/><path d="M15.8,1.2 Q16.7,0.4 17.5,1.1 L18.8,2.4 Q19.6,3.2 18.8,4.1 Z" fill="#8a8a8a"/></svg>
<div class="abs" style="left:1676px;top:302px;width:73px;height:71px;border:5px solid #ec1c24;border-radius:12px"></div>
<svg class="abs" style="left:236px;top:305px" width="110" height="120" viewBox="236 305 110 120"><polygon points="254.5,320 262,318.5 290,318.5 290,404.5 262,404.5 255,402" fill="#e23a22"/><polygon points="254.5,320 262,318.5 262,404.5 255,402" fill="#c92a1c"/><text x="266" y="336" font-family="Liberation Sans" font-weight="700" font-size="12" fill="#f5d000" textLength="21" lengthAdjust="spacingAndGlyphs" transform="rotate(-8 276 332)">UNO</text><text x="265" y="347" font-family="Liberation Sans" font-weight="700" font-size="8" fill="#fff" textLength="25" lengthAdjust="spacingAndGlyphs" transform="rotate(-8 277 344)">STACKO</text><polygon points="264,351 288,348 288,353 264,356" fill="#2aa040"/><polygon points="265,356 288,353 288,358 265,361" fill="#2a6ad0"/><polygon points="266,361 288,358 288,363 266,366" fill="#a030c0"/><polygon points="264,366 288,363 288,368 264,371" fill="#f0c000"/><polygon points="265,371 288,368 288,373 265,376" fill="#d03030"/><polygon points="266,376 288,373 288,378 266,381" fill="#30a0d0"/><polygon points="264,381 288,378 288,383 264,386" fill="#40a040"/><polygon points="265,386 288,383 288,388 265,391" fill="#c030a0"/><polygon points="266,391 288,388 288,393 266,396" fill="#3050c0"/><ellipse cx="270" cy="385" rx="6" ry="4" fill="#f2b09a"/><rect x="286" y="324" width="36" height="7" fill="#d8202a"/><rect x="289" y="325" width="6" height="4" fill="#fff" opacity=".55"/><rect x="305" y="325" width="6" height="4" fill="#fff" opacity=".45"/><rect x="286" y="331" width="36" height="8" fill="#f2c400"/><rect x="289" y="332" width="6" height="5" fill="#fff" opacity=".55"/><rect x="305" y="332" width="6" height="5" fill="#fff" opacity=".45"/><rect x="286" y="339" width="36" height="6" fill="#2a3fb8"/><rect x="289" y="340" width="6" height="3" fill="#fff" opacity=".55"/><rect x="305" y="340" width="6" height="3" fill="#fff" opacity=".45"/><rect x="286" y="345" width="36" height="6" fill="#e0208a"/><rect x="289" y="346" width="6" height="3" fill="#fff" opacity=".55"/><rect x="305" y="346" width="6" height="3" fill="#fff" opacity=".45"/><rect x="286" y="351" width="36" height="6" fill="#f0c800"/><rect x="289" y="352" width="6" height="3" fill="#fff" opacity=".55"/><rect x="305" y="352" width="6" height="3" fill="#fff" opacity=".45"/><rect x="286" y="357" width="36" height="5" fill="#d42450"/><rect x="289" y="358" width="6" height="2" fill="#fff" opacity=".55"/><rect x="305" y="358" width="6" height="2" fill="#fff" opacity=".45"/><rect x="286" y="362" width="36" height="5" fill="#d8202a"/><rect x="289" y="363" width="6" height="2" fill="#fff" opacity=".55"/><rect x="305" y="363" width="6" height="2" fill="#fff" opacity=".45"/><rect x="286" y="367" width="36" height="6" fill="#2a9a4a"/><rect x="289" y="368" width="6" height="3" fill="#fff" opacity=".55"/><rect x="305" y="368" width="6" height="3" fill="#fff" opacity=".45"/><rect x="286" y="373" width="36" height="5" fill="#1f6a35"/><rect x="289" y="374" width="6" height="2" fill="#fff" opacity=".55"/><rect x="305" y="374" width="6" height="2" fill="#fff" opacity=".45"/><rect x="286" y="378" width="36" height="7" fill="#2f48c0"/><rect x="289" y="379" width="6" height="4" fill="#fff" opacity=".55"/><rect x="305" y="379" width="6" height="4" fill="#fff" opacity=".45"/><rect x="286" y="385" width="36" height="5" fill="#3050c8"/><rect x="289" y="386" width="6" height="2" fill="#fff" opacity=".55"/><rect x="305" y="386" width="6" height="2" fill="#fff" opacity=".45"/><rect x="286" y="390" width="36" height="5" fill="#f2c400"/><rect x="289" y="391" width="6" height="2" fill="#fff" opacity=".55"/><rect x="305" y="391" width="6" height="2" fill="#fff" opacity=".45"/><rect x="286" y="395" width="36" height="5" fill="#d8202a"/><rect x="289" y="396" width="6" height="2" fill="#fff" opacity=".55"/><rect x="305" y="396" width="6" height="2" fill="#fff" opacity=".45"/><rect x="286" y="400" width="36" height="6" fill="#2a8a40"/><rect x="289" y="401" width="6" height="3" fill="#fff" opacity=".55"/><rect x="305" y="401" width="6" height="3" fill="#fff" opacity=".45"/><rect x="286" y="406" width="36" height="4" fill="#1f6a35"/><rect x="289" y="407" width="6" height="1" fill="#fff" opacity=".55"/><rect x="305" y="407" width="6" height="1" fill="#fff" opacity=".45"/></svg>
<svg class="abs" style="left:236px;top:440px" width="110" height="100" viewBox="236 440 110 100"><path d="M255,449 L277,449 Q283,458 288,466 L297,476 Q300,484 296,490 Q290,493 284,489 L272,478 Q266,471 262,465 Z" fill="#f2d3c3"/><path d="M337,451 L337,476 Q326,486 318,490 Q310,496 300,497 Q290,496 289,490 Q292,482 300,476 Q309,468 318,463 Z" fill="#efcbb8"/><path d="M287,470 Q284,480 290,486" stroke="#e0b09a" stroke-width="1" fill="none"/><polygon points="263,459 281,451 287,468 270,476" fill="#1d1d22" stroke="#2a9ee0" stroke-width="1.6"/><polygon points="314,455 331,449 337,474 320,480" fill="#1d1d22" stroke="#2a9ee0" stroke-width="1.6"/><path d="M266,474 Q268,490 270,503" stroke="#2a9ee0" stroke-width="2.2" fill="none"/><path d="M327,480 Q324,495 319,505" stroke="#2a9ee0" stroke-width="2.2" fill="none"/><path d="M268,503 Q268,528 291,528 Q314,528 317,505" stroke="#4a9ae6" stroke-width="10" fill="none"/><line x1="262.0" y1="500" x2="265.0" y2="522" stroke="#2f78d0" stroke-width="1.2" opacity=".6"/><line x1="266.2" y1="520" x2="269.2" y2="522" stroke="#2f78d0" stroke-width="1.2" opacity=".6"/><line x1="270.4" y1="520" x2="273.4" y2="522" stroke="#2f78d0" stroke-width="1.2" opacity=".6"/><line x1="274.6" y1="520" x2="277.6" y2="533" stroke="#2f78d0" stroke-width="1.2" opacity=".6"/><line x1="278.8" y1="520" x2="281.8" y2="533" stroke="#2f78d0" stroke-width="1.2" opacity=".6"/><line x1="283.0" y1="520" x2="286.0" y2="533" stroke="#2f78d0" stroke-width="1.2" opacity=".6"/><line x1="287.2" y1="520" x2="290.2" y2="533" stroke="#2f78d0" stroke-width="1.2" opacity=".6"/><line x1="291.4" y1="520" x2="294.4" y2="533" stroke="#2f78d0" stroke-width="1.2" opacity=".6"/><line x1="295.6" y1="520" x2="298.6" y2="533" stroke="#2f78d0" stroke-width="1.2" opacity=".6"/><line x1="299.8" y1="520" x2="302.8" y2="533" stroke="#2f78d0" stroke-width="1.2" opacity=".6"/><line x1="304.0" y1="520" x2="307.0" y2="533" stroke="#2f78d0" stroke-width="1.2" opacity=".6"/><line x1="308.2" y1="520" x2="311.2" y2="522" stroke="#2f78d0" stroke-width="1.2" opacity=".6"/><line x1="312.4" y1="520" x2="315.4" y2="522" stroke="#2f78d0" stroke-width="1.2" opacity=".6"/><line x1="316.6" y1="500" x2="319.6" y2="522" stroke="#2f78d0" stroke-width="1.2" opacity=".6"/><rect x="240.5" y="460.5" width="23" height="16" fill="#f4eee8" stroke="#7ab8e8" stroke-width="1"/><path d="M243,466 Q252,470 261,465 L261,472 Q252,476 243,472 Z" fill="#e8b8a0"/><rect x="240.5" y="478.5" width="16" height="12" fill="#e8ddd0" stroke="#7ab8e8" stroke-width="1"/><ellipse cx="248" cy="486" rx="5" ry="4" fill="#a07850"/><path d="M245,503 Q252,498 258,503 Q260,510 254,512 M244,505 Q243,514 249,516" stroke="#e05028" stroke-width="2.5" fill="none"/></svg>
<svg class="abs" style="left:236px;top:572px" width="110" height="115" viewBox="236 572 110 115"><path d="M281,590 Q296,583 312,590 L313,602 L279,602 Z" fill="#ebc8ae"/><ellipse cx="296" cy="585" rx="6" ry="4.5" fill="#ecc9b0"/><path d="M287,580 Q296,574 306,580 L306,584 Q296,580 287,584 Z" fill="#3a2a25"/><path d="M280,592 Q270,604 258,621 Q265,634 280,644" fill="none" stroke="#e9c3a5" stroke-width="6" stroke-linecap="round" stroke-linejoin="round"/><path d="M311,592 Q322,606 331,623 Q324,636 308,647" fill="none" stroke="#e9c3a5" stroke-width="6" stroke-linecap="round" stroke-linejoin="round"/><path d="M280,590 L284,590 Q296,610 307,590 L311,592 Q311,612 307,636 L311,650 L277,650 L281,636 Q277,612 280,590 Z" fill="#1a1618"/><rect x="279" y="615" width="1.6" height="22" fill="#e060b0"/><rect x="307" y="615" width="1.6" height="22" fill="#e060b0"/><circle cx="294" cy="621" r="2.2" fill="#d050a0"/><circle cx="294" cy="630" r="2.2" fill="#d050a0"/><circle cx="294" cy="639" r="2.2" fill="#d050a0"/><path d="M277,650 H311 L310,678 H297 L294,662 L291,678 H279 Z" fill="#131113"/><circle cx="257" cy="642" r="9.5" fill="#fff" stroke="#e070c0" stroke-width="1"/><path d="M252,636 L254,636 Q257,640 260,636 L262,636 L262,648 L252,648 Z" fill="#151515"/><circle cx="257" cy="667" r="9.5" fill="#fff" stroke="#e070c0" stroke-width="1"/><path d="M252,660 H262 L261,674 H258 L257,666 L256,674 H253 Z" fill="#151515"/></svg>
<svg class="abs" style="left:246px;top:720px" width="90" height="110" viewBox="246 720 90 110"><path d="M273,731 Q277,724 285,728 Q282,738 281,748 Q280,756 276,762 Q270,766 268,760 Q267,748 271,740 Z" fill="#2a2020"/><path d="M283,729 Q290,731 290,738 L289,744 Q286,747 283,746 Z" fill="#efd6ca"/><path d="M279,750 L296,748 L298,760 L290,768 L281,762 Z" fill="#ead2c6"/><path d="M275,752 Q270,770 262,790 L265,792 Q273,775 279,758 Z" fill="#efd6ca"/><path d="M296,752 Q300,768 315,775 L317,778 Q300,775 294,762 Z" fill="#efd6ca"/><path d="M279,754 L283,756 Q289,766 294,756 L296,752 L298,766 Q295,772 290,770 Q284,772 280,766 Z" fill="#2e2a2c"/><path d="M280,766 Q290,772 298,766 Q300,782 298,796 L290,803 L280,796 Q278,782 280,766 Z" fill="#121014"/><path d="M264,790 Q272,782 280,772 L281,797 L288,802 Q276,800 264,792 Z" fill="#3e3e46" opacity=".9"/><path d="M298,770 Q308,776 317,778 Q314,790 300,797 Z" fill="#46464e" opacity=".9"/><path d="M286,800 L296,799 L295,817 L288,817 Z" fill="#efd8cc"/><circle cx="289.5" cy="761" r="3.3" fill="none" stroke="#e02020" stroke-width="1.2"/></svg>
</body></html>
